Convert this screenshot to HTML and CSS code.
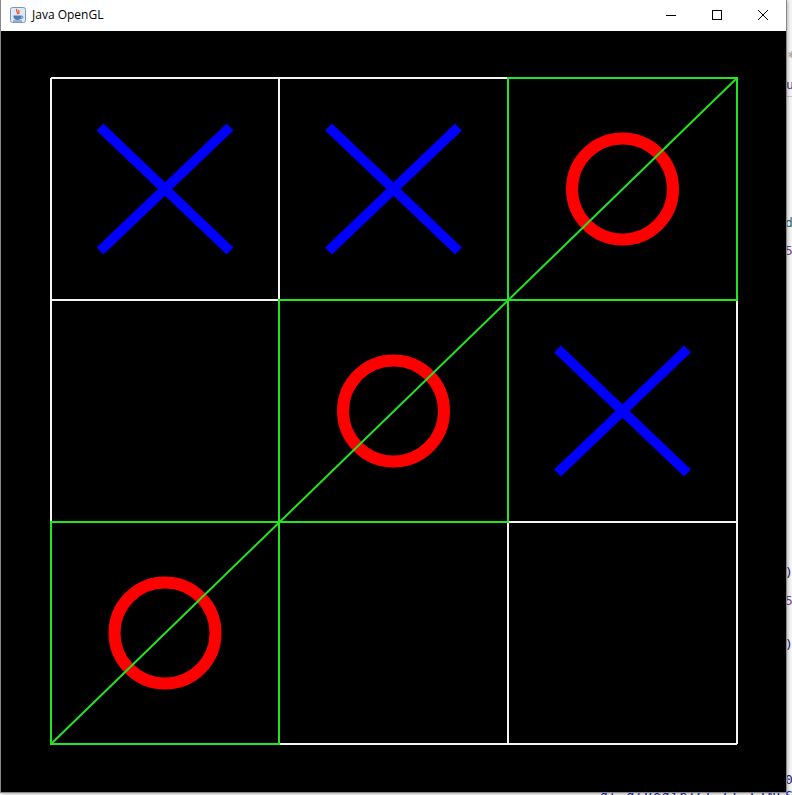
FILE: index.html
```html
<!DOCTYPE html>
<html>
<head>
<meta charset="utf-8">
<link rel="stylesheet" href="styles.css">
</head>
<body>
<div class="desktop">
  <div class="ide">
    <span class="frag f1">✱</span>
    <span class="frag f2">u</span>
    <span class="rule r1"></span>
    <span class="frag f3">de</span>
    <span class="frag f4">5:</span>
    <span class="frag f5">).</span>
    <span class="frag f6">5:</span>
    <span class="frag f7">).</span>
    <span class="frag f8">0</span>
    <span class="frag f9">gl.glBegin(GL.GL_LINES);</span>
  </div>
  <div class="window">
    <div class="titlebar">
      <div class="title">
        <svg class="appicon" width="16" height="16" viewBox="0 0 16 16">
          <rect x="0.5" y="0.5" width="15" height="15" rx="2" fill="#dfe9f5" stroke="#7d97b8"/>
          <path d="M7 2 C5 4 9 5 7 7 M9 3 C8 4.5 10 5 8.5 7" stroke="#e2471b" stroke-width="1.2" fill="none"/>
          <path d="M3.5 8.5 H11.5 V10 C11.5 12 9.5 13 7.5 13 C5.5 13 3.5 12 3.5 10 Z" fill="#4f7bb5"/>
          <path d="M11.5 9 C13.5 9 13.5 11.5 11 11.5" stroke="#4f7bb5" stroke-width="1" fill="none"/>
          <path d="M3 14 H12" stroke="#4f7bb5" stroke-width="1"/>
        </svg>
        <span class="title-text">Java OpenGL</span>
      </div>
      <div class="controls">
        <svg class="ctl" width="46" height="30" viewBox="0 0 46 30"><path d="M18 15.5 H28" stroke="#000" stroke-width="1"/></svg>
        <svg class="ctl" width="46" height="30" viewBox="0 0 46 30"><rect x="18.5" y="10.5" width="9" height="9" fill="none" stroke="#000" stroke-width="1"/></svg>
        <svg class="ctl" width="46" height="30" viewBox="0 0 46 30"><path d="M18 10 L28 20 M28 10 L18 20" stroke="#000" stroke-width="1"/></svg>
      </div>
    </div>
    <svg class="canvas" width="785" height="761" viewBox="1 31 785 761">
      <rect x="1" y="31" width="785" height="761" fill="#000"/>
      <g stroke="#f4f4f4" stroke-width="2" fill="none">
        <path d="M51 78 H737 M51 300 H737 M51 522 H737 M51 744 H737"/>
        <path d="M51 78 V744 M279 78 V744 M508 78 V744 M737 78 V744"/>
      </g>
      <g stroke="#0000ff" stroke-width="10" fill="none">
        <path d="M100 127 L230 251 M230 127 L100 251"/>
        <path d="M328.5 127 L458.5 251 M458.5 127 L328.5 251"/>
        <path d="M557.5 349 L687.5 473 M687.5 349 L557.5 473"/>
      </g>
      <g stroke="#ff0000" stroke-width="12" fill="none">
        <circle cx="622.5" cy="189" r="50.5"/>
        <circle cx="393.5" cy="411" r="50.5"/>
        <circle cx="165" cy="633" r="50.5"/>
      </g>
      <g stroke="#22e622" stroke-width="2" fill="none">
        <rect x="508" y="78" width="229" height="222"/>
        <rect x="279" y="300" width="229" height="222"/>
        <rect x="51" y="522" width="228" height="222"/>
        <path d="M51 744 L737 78" stroke-width="2"/>
      </g>
    </svg>
  </div>
</div>
</body>
</html>
```

FILE: styles.css
```css
html, body {
  margin: 0;
  padding: 0;
  width: 792px;
  height: 795px;
  overflow: hidden;
  background: #f0f0f0;
  font-family: "Open Sans", "Noto Sans", "Liberation Sans", sans-serif;
}

.desktop {
  position: relative;
  width: 792px;
  height: 795px;
}

.ide {
  position: absolute;
  inset: 0;
  background: #f4f4f4;
  font-family: "DejaVu Sans Mono", "Liberation Mono", monospace;
  font-size: 13px;
}

.frag {
  position: absolute;
  line-height: 14px;
  white-space: nowrap;
}

.f1 { left: 788px; top: 47px; color: #b0b0b0; font-size: 12px; }
.f2 { left: 786px; top: 78px; color: #3a3a7a; }
.r1 { position: absolute; left: 786px; top: 96px; width: 6px; height: 1px; background: #c8c8c8; }
.f3 { left: 785px; top: 216px; color: #2e6a6a; }
.f4 { left: 785px; top: 244px; color: #7a4a7a; }
.f5 { left: 785px; top: 566px; color: #1a1a6a; }
.f6 { left: 785px; top: 594px; color: #7a4a7a; }
.f7 { left: 785px; top: 638px; color: #1a1a6a; }
.f8 { left: 785px; top: 773px; color: #1a1a6a; }
.f9 { left: 600px; top: 789px; color: #1a1a9a; letter-spacing: 1px; }

.window {
  position: absolute;
  left: 0;
  top: 0;
  width: 787px;
  height: 793px;
  box-sizing: border-box;
  border-left: 1px solid #8a8a8a;
  border-right: 1px solid #8a8a8a;
  border-bottom: 1px solid #8a8a8a;
  display: flex;
  flex-direction: column;
  background: #000;
  box-shadow: 1px 1px 3px rgba(0,0,0,0.25);
}

.titlebar {
  height: 31px;
  flex: none;
  background: #fff;
  display: flex;
  align-items: flex-start;
  justify-content: space-between;
}

.title {
  display: flex;
  align-items: center;
  height: 30px;
  padding-left: 9px;
  gap: 6px;
}

.appicon {
  display: block;
}

.title-text {
  font-family: "Open Sans", "Noto Sans", sans-serif;
  font-size: 12px;
  color: #000;
  line-height: 16px;
}

.controls {
  display: flex;
}

.ctl {
  display: block;
}

.canvas {
  display: block;
  flex: none;
}
```
